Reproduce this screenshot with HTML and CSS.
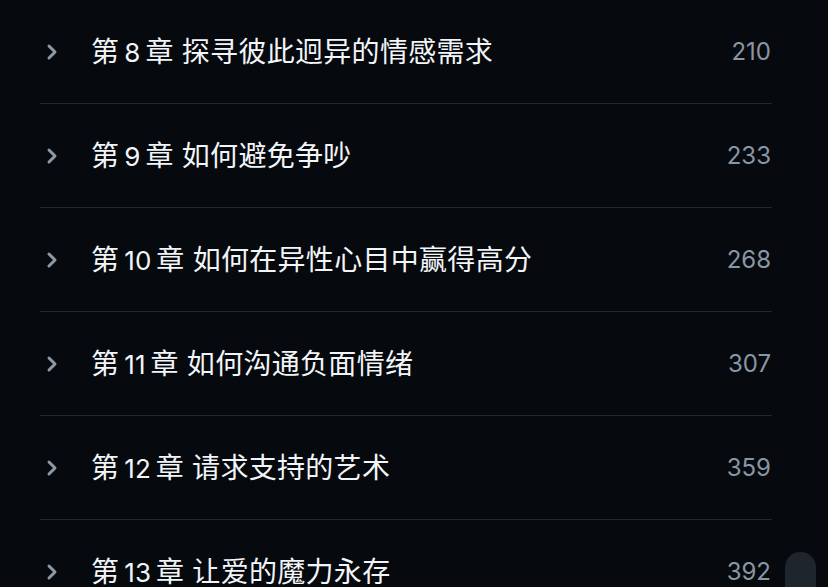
FILE: index.html
```html
<!DOCTYPE html>
<html lang="zh">
<head>
<meta charset="utf-8">
<link rel="stylesheet" href="styles.css">
</head>
<body>
<div class="page">
  <ul class="toc">
    <li class="row"><span class="chev"><svg viewBox="0 0 12 18" width="12" height="18"><path d="M3 3 L9 9 L3 15" fill="none" stroke="currentColor" stroke-width="3" stroke-linecap="round" stroke-linejoin="round"/></svg></span><span class="title">第<span class="n">8</span>章 探寻彼此迥异的情感需求</span><span class="num">210</span></li>
    <li class="row"><span class="chev"><svg viewBox="0 0 12 18" width="12" height="18"><path d="M3 3 L9 9 L3 15" fill="none" stroke="currentColor" stroke-width="3" stroke-linecap="round" stroke-linejoin="round"/></svg></span><span class="title">第<span class="n">9</span>章 如何避免争吵</span><span class="num">233</span></li>
    <li class="row"><span class="chev"><svg viewBox="0 0 12 18" width="12" height="18"><path d="M3 3 L9 9 L3 15" fill="none" stroke="currentColor" stroke-width="3" stroke-linecap="round" stroke-linejoin="round"/></svg></span><span class="title">第<span class="n">10</span>章 如何在异性心目中赢得高分</span><span class="num">268</span></li>
    <li class="row"><span class="chev"><svg viewBox="0 0 12 18" width="12" height="18"><path d="M3 3 L9 9 L3 15" fill="none" stroke="currentColor" stroke-width="3" stroke-linecap="round" stroke-linejoin="round"/></svg></span><span class="title">第<span class="n">11</span>章 如何沟通负面情绪</span><span class="num">307</span></li>
    <li class="row"><span class="chev"><svg viewBox="0 0 12 18" width="12" height="18"><path d="M3 3 L9 9 L3 15" fill="none" stroke="currentColor" stroke-width="3" stroke-linecap="round" stroke-linejoin="round"/></svg></span><span class="title">第<span class="n">12</span>章 请求支持的艺术</span><span class="num">359</span></li>
    <li class="row"><span class="chev"><svg viewBox="0 0 12 18" width="12" height="18"><path d="M3 3 L9 9 L3 15" fill="none" stroke="currentColor" stroke-width="3" stroke-linecap="round" stroke-linejoin="round"/></svg></span><span class="title">第<span class="n">13</span>章 让爱的魔力永存</span><span class="num">392</span></li>
  </ul>
  <div class="thumb"></div>
</div>
</body>
</html>
```
FILE: styles.css
```css
html, body {
  margin: 0;
  padding: 0;
  background: #06090d;
  height: 100%;
  overflow: hidden;
}
.page {
  position: relative;
  width: 828px;
  height: 587px;
  overflow: hidden;
  font-family: "Noto Sans CJK SC", "Noto Sans", sans-serif;
}
.toc {
  list-style: none;
  margin: 0;
  padding: 0 56px 0 40px;
}
.row {
  display: flex;
  align-items: center;
  height: 103px;
  border-bottom: 1px solid #23282e;
}
.chev {
  display: flex;
  width: 51px;
  padding-left: 6px;
  box-sizing: border-box;
  color: #8d99a6;
}
.title {
  flex: 1;
  color: #f2f5f8;
  font-size: 28px;
  line-height: 1;
  letter-spacing: 0.3px;
  word-spacing: 1.5px;
  white-space: nowrap;
  margin-top: -2px;
}
.n {
  margin: 0 5px;
  font-family: "Inter", "Noto Sans", sans-serif;
  font-size: 26px;
  letter-spacing: 0;
  font-variant-numeric: proportional-nums;
}
.num {
  color: #8a96a3;
  font-size: 24px;
  line-height: 1;
  font-family: "Inter", "Noto Sans", sans-serif;
  margin-right: 1px;
}
.thumb {
  position: absolute;
  left: 785px;
  top: 552px;
  width: 31px;
  height: 60px;
  border-radius: 15px;
  background: #1f252d;
}
```
